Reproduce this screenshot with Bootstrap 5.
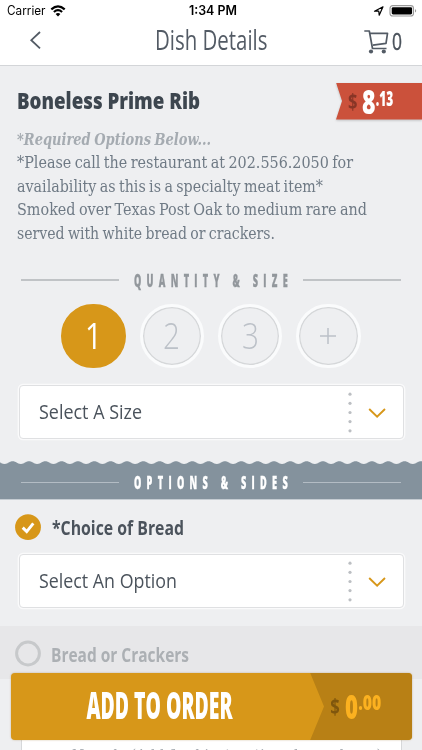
<!DOCTYPE html>
<html lang="en">
<head>
<meta charset="utf-8">
<meta name="viewport" content="width=device-width, initial-scale=1">
<title>Dish Details</title>
<link href="https://cdn.jsdelivr.net/npm/bootstrap@5.3.0/dist/css/bootstrap.min.css" rel="stylesheet">
<style>
body{font-family:"Open Sans","Noto Sans",sans-serif;background:#eeeff1;color:#4b535c;height:750px;overflow:hidden}
.fit{display:inline-block;white-space:nowrap;transform-origin:0 50%;line-height:1}
svg{display:block;flex:none}
.status{height:22px;background:#fff;color:#000;font:12.5px/22px Inter,sans-serif}
.status .fit{line-height:22px}
.titlebar{height:43.5px;background:#fff;border-bottom:1px solid #d3d5d8}
.page-title{font-size:26.5px;font-weight:400;color:#535b65;margin-bottom:6px}
.cart-count{font-size:23px;color:#4b535c;-webkit-text-stroke:.4px}
.dish{height:202px;padding-left:16.5px}
.dish-name{font-size:22.5px;font-weight:800;color:#3d464f}
.dish-head{padding-top:18.5px}
.ribbon{width:86px;height:37px;margin-top:17px;background:#cb513b;clip-path:polygon(0 0,100% 0,100% 100%,0 100%,7% 50%)}
.ribbon-wrap{filter:drop-shadow(0 1px 1px #0003)}
.copy{font-family:"DejaVu Serif",serif;font-size:16px;word-spacing:-1.3px;color:#6f7a85}
.copy div{height:23.6px;line-height:23.6px}
.copy .fit{line-height:23.6px}
.need{color:#a5abb1;font-weight:700;font-style:italic}
.rule{width:98px;height:1.4px;background:#c0c3c6}
.section-name{font-size:17.3px;font-weight:800;color:#92979c;letter-spacing:10px;-webkit-text-stroke:.3px;margin-left:15px}
.section-gap{width:10px}
.qty-row{gap:13.7px;margin-top:15px}
.qty{width:64.6px;height:64.6px;border:3px solid #fafbfc;color:#bcc1c8;box-shadow:inset 0 0 0 1.3px #d5d7d9;font-size:36px;font-weight:300}
.qty.on{background:#d79719;border-color:#d79719;box-shadow:none;color:#fff;font-weight:400}
.picker{height:54px;margin:0 18.5px;border:1.5px solid #dfe0e2;border-radius:4px;background:#fff;box-shadow:0 0 0 1.3px #fafafb;padding-left:19px;font-size:20px}
.size-picker{margin-top:17px}
.band{height:39.5px;background:linear-gradient(#84929d,#84929d) 0 4px/100% no-repeat;border-bottom:1px solid #c5ccd2;margin-top:21.5px}
.band .section-name{color:#fff}
.band .rule{background:#b3bcc4}
.option{font-size:19.5px;font-weight:700}
.muted-row{height:53px;background:#e7e7e9;color:#acb0b4;margin-top:17.5px}
.order{left:10.5px;top:673px;width:401px;height:66.5px;border-radius:4px;background:#d79719;overflow:hidden;box-shadow:0 0 2px #8a5a0066}
.note{margin:58px 20.5px 0;height:40px;background:#fff;border:1px solid #d6d8da;padding:10px 0 0 50px;font-family:"DejaVu Serif",serif;font-size:14px;line-height:1;color:#a5abb1}
</style>
<script src="https://cdn.jsdelivr.net/npm/bootstrap@5.3.0/dist/js/bootstrap.bundle.min.js"></script>
</head>
<body>
<div class="status d-flex position-relative">
  <span class="fit" style="margin-left:7px" data-w="38.5">Carrier</span>
  <svg class="ms-1 mt-1" width="16" height="14" viewBox="0 0 16 14" fill="none" stroke="#000" stroke-width="2.2"><path d="M1.3 5.3Q8-.6 14.7 5.3M3.9 8Q8 4.4 12.1 8"/><path d="M8 12.4 5.6 9.9Q8 8 10.4 9.9Z" fill="#000" stroke="none"/></svg>
  <span class="position-absolute fw-semibold" style="left:188.5px"><span class="fit" data-w="48">1:34 PM</span></span>
  <svg class="ms-auto" width="50" height="22" viewBox="0 0 50 22"><path d="M2.5 11.2 11 6.8 7.2 15.2 6.8 11.2Z" fill="none" stroke="#000" stroke-width="1.2" stroke-linejoin="round"/><rect x="18" y="5.6" width="23.5" height="10.4" rx="2.8" fill="none" stroke="#999" stroke-width="1.1"/><rect x="19.7" y="7.2" width="20.4" height="7.2" rx="1.4"/><path d="M43 9q2.4 1.8 0 3.6Z" fill="#999"/></svg>
</div>
<header class="titlebar d-flex align-items-center">
  <svg width="155" height="43" viewBox="0 0 155 43" fill="none" stroke="#535b65" stroke-width="1.8"><path d="M40 10 31.3 18.2 40 26.4"/></svg>
  <span class="fit page-title" data-w="112.5">Dish Details</span>
  <svg class="ms-auto" width="28" height="43" viewBox="364 22 28 43" fill="none" stroke="#535b65" stroke-width="1.7" stroke-linejoin="round"><path d="M364.3 31h5l3.2 17.5h14M370.5 33.3h17L386 43.4 373 45.2"/><g fill="#535b65" stroke="none"><circle cx="371" cy="51.5" r="2.1"/><circle cx="383.8" cy="51.5" r="2.1"/></g></svg>
  <span class="fit cart-count mb-1" data-w="10">0</span><span style="width:20px"></span>
</header>
<section class="dish d-flex flex-column">
  <div class="d-flex justify-content-between align-items-start">
    <h1 class="dish-head m-0 lh-1"><span class="fit dish-name" data-w="183">Boneless Prime Rib</span></h1>
    <div class="ribbon-wrap"><div class="ribbon">
      <svg width="86" height="37" viewBox="0 0 86 37" font-family="Open Sans" font-weight="800" fill="#fff"><text x="12" y="26" font-size="21" font-weight="700" fill="#883526" textLength="9.5" lengthAdjust="spacingAndGlyphs">$</text><text x="26" y="31" font-size="33" textLength="13.5" lengthAdjust="spacingAndGlyphs">8</text><text x="39.7" y="22.5" font-size="21.5" textLength="17.5" lengthAdjust="spacingAndGlyphs">.13</text></svg>
    </div></div>
  </div>
  <div class="copy pt-1 mt-1">
    <div><span class="fit need" data-w="194">*Required Options Below...</span></div>
    <div><span class="fit" data-w="336">*Please call the restaurant at 202.556.2050 for</span></div>
    <div><span class="fit" data-w="306">availability as this is a specialty meat item*</span></div>
    <div><span class="fit" data-w="350">Smoked over Texas Post Oak to medium rare and</span></div>
    <div><span class="fit" data-w="258">served with white bread or crackers.</span></div>
  </div>
</section>
<div class="d-flex align-items-center justify-content-center pt-1 lh-1">
  <i class="rule"></i><span class="fit section-name" data-w="159">QUANTITY &amp; SIZE</span><span class="section-gap"></span><i class="rule"></i>
</div>
<div class="qty-row d-flex justify-content-center">
  <div class="qty on rounded-circle d-flex align-items-center justify-content-center"><span class="fit" data-w="17">1</span></div>
  <div class="qty rounded-circle d-flex align-items-center justify-content-center"><span class="fit" data-w="17">2</span></div>
  <div class="qty rounded-circle d-flex align-items-center justify-content-center"><span class="fit" data-w="17">3</span></div>
  <div class="qty rounded-circle d-flex align-items-center justify-content-center"><svg width="18" height="18" stroke="#bcc1c8" stroke-width="1.5"><path d="M1 9h16M9 1v16"/></svg></div>
</div>
<div class="picker size-picker d-flex align-items-center justify-content-between">
  <span class="fit" data-w="103">Select A Size</span>
  <svg width="56" height="50" viewBox="0 0 56 50"><g fill="#bcbfc3"><circle cx="3" cy="7.2" r="1.6"/><circle cx="3" cy="16.3" r="1.6"/><circle cx="3" cy="25.5" r="1.6"/><circle cx="3" cy="34.6" r="1.6"/><circle cx="3" cy="43.8" r="1.6"/></g><path d="m22.2 22 7.9 7.6 7.9-7.6" fill="none" stroke="#d79719" stroke-width="1.9"/></svg>
</div>
<div class="band">
  <svg width="422" height="5"><defs><pattern id="wave" width="16.33" height="5" patternUnits="userSpaceOnUse" x="4.5"><path d="M0 3C4 3 4.5 .3 8.165 .3S12.3 3 16.33 3V5H0Z" fill="#84929d"/></pattern></defs><rect width="422" height="5" fill="url(#wave)"/></svg>
  <div class="d-flex align-items-center justify-content-center lh-1 pt-2">
    <i class="rule"></i><span class="fit section-name" data-w="159">OPTIONS &amp; SIDES</span><span class="section-gap"></span><i class="rule"></i>
  </div>
</div>
<div class="d-flex align-items-center option">
  <svg width="52" height="54" viewBox="0 0 52 54"><circle cx="28" cy="27.2" r="12.9" fill="#d79719"/><path d="m22.7 27.6 4 4 6.6-8.3" fill="none" stroke="#fff" stroke-width="2.9"/></svg>
  <span class="fit" data-w="132">*Choice of Bread</span>
</div>
<div class="picker d-flex align-items-center justify-content-between">
  <span class="fit" data-w="138">Select An Option</span>
  <svg width="56" height="50" viewBox="0 0 56 50"><g fill="#bcbfc3"><circle cx="3" cy="7.2" r="1.6"/><circle cx="3" cy="16.3" r="1.6"/><circle cx="3" cy="25.5" r="1.6"/><circle cx="3" cy="34.6" r="1.6"/><circle cx="3" cy="43.8" r="1.6"/></g><path d="m22.2 22 7.9 7.6 7.9-7.6" fill="none" stroke="#d79719" stroke-width="1.9"/></svg>
</div>
<div class="muted-row d-flex align-items-center option">
  <svg width="51" height="53" viewBox="0 0 51 53"><circle cx="28" cy="27.5" r="11.4" fill="none" stroke="#c7c9cb" stroke-width="3"/></svg>
  <span class="fit pt-1" data-w="138">Bread or Crackers</span>
</div>
<div class="note"><span class="fit" data-w="310">Nevada (Add food instructions here please)</span></div>
<button class="order position-fixed border-0 p-0 d-flex align-items-stretch text-white">
  <svg width="401" height="67" viewBox="0 0 401 67" font-family="Open Sans" font-weight="800" fill="#fbb120"><path d="M299.2 0H401V67H299.2L313 33.5Z" fill="#b88015"/><text x="75.5" y="46" font-size="36.5" fill="#fff" textLength="146" lengthAdjust="spacingAndGlyphs">ADD TO ORDER</text><text x="319.3" y="41" font-size="21" font-weight="700" fill="#7f560d" textLength="9.5" lengthAdjust="spacingAndGlyphs">$</text><text x="334" y="45.5" font-size="33" textLength="13" lengthAdjust="spacingAndGlyphs">0</text><text x="347.3" y="37" font-size="21.5" textLength="23" lengthAdjust="spacingAndGlyphs">.00</text></svg>
</button>
<script>
// Condense each label to its data-w width and give the freed space back to the row.
document.querySelectorAll('.fit').forEach(function(e){
  var w=e.getBoundingClientRect().width,t=+e.dataset.w;
  e.style.transform='scaleX('+t/w+')';
  e.style.marginRight=(t-w)+'px';
});
</script>
</body>
</html>
